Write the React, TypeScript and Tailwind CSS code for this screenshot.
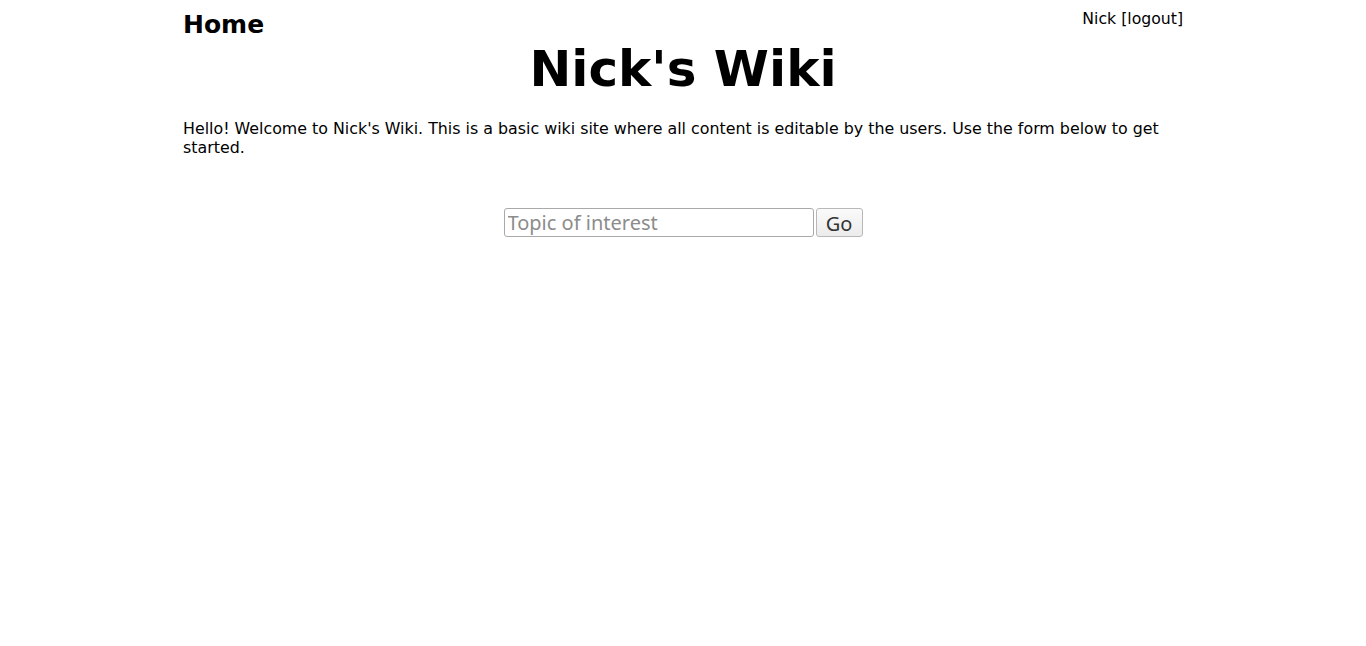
import React from "react";

const App: React.FC = () => {
  return (
    <div className="min-h-screen bg-white text-black font-['DejaVu_Sans',sans-serif]">
      <div className="w-[1000px] mx-auto">
        <div className="flex justify-between items-start">
          <h2 className="text-[25px] font-bold leading-[29px] mt-[10px]">Home</h2>
          <div className="text-[15.7px] leading-[19px] mt-[9px]">Nick [logout]</div>
        </div>
        <h1 className="text-center text-[50px] font-bold leading-[58px] mt-[1px]">Nick's Wiki</h1>
        <p className="text-[15.85px] leading-[19px] mt-[21px]">
          Hello! Welcome to Nick's Wiki. This is a basic wiki site where all content is editable by the users. Use the
          form below to get started.
        </p>
        <form className="flex justify-center items-center gap-[2px] mt-[51px]">
          <input
            type="text"
            placeholder="Topic of interest"
            className="w-[310px] h-[29px] border border-[#a9a9a9] rounded-[3px] px-[3px] text-[20px] font-['Noto_Sans',sans-serif] placeholder:text-[#8c8c8c] outline-none"
          />
          <button
            type="button"
            className="w-[47px] h-[29px] border border-[#b8b8b8] rounded-[3px] bg-gradient-to-b from-[#fafafa] to-[#ececec] text-[20px] text-[#333] font-['Noto_Sans',sans-serif]"
          >
            Go
          </button>
        </form>
      </div>
    </div>
  );
};

export default App;
